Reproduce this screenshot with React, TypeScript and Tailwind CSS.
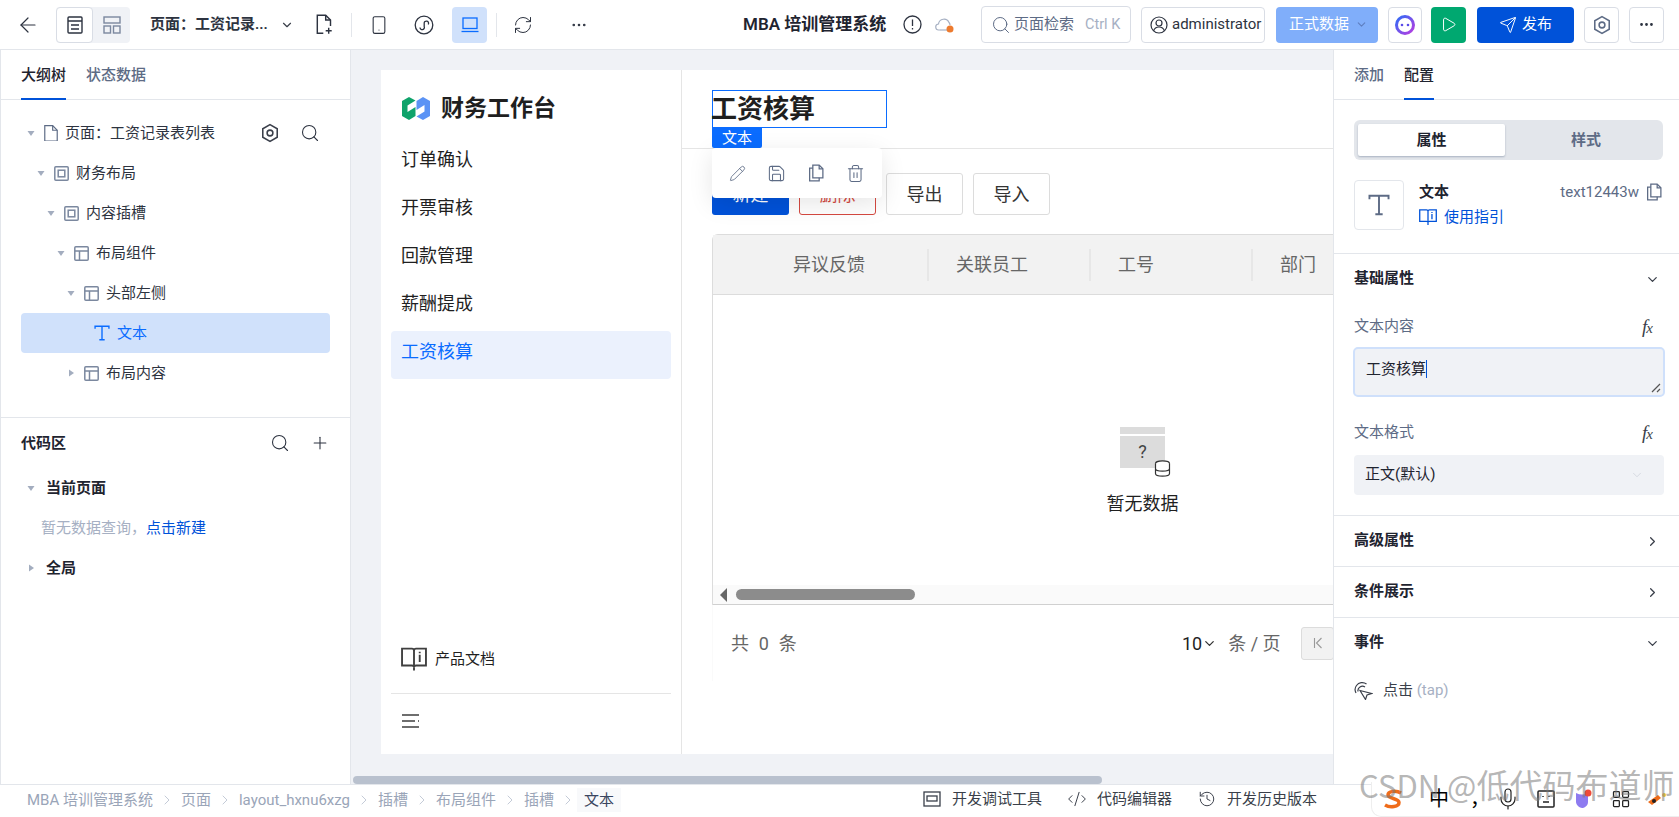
import React from "react";
import { ArrowLeft, ChevronDown, ChevronRight, Search, Plus, Ellipsis, Send, Pencil, Save, Trash2, Smartphone, RefreshCw, Mic, LayoutGrid, History, Code2, Play } from "lucide-react";

const Caret = ({ open = true, color = "#a3adbf" }: { open?: boolean; color?: string }) => (
  <svg width="10" height="10" viewBox="0 0 10 10" className="shrink-0">
    {open ? <path d="M1.5 3h7L5 8z" fill={color} /> : <path d="M3 1.5v7L8 5z" fill={color} />}
  </svg>
);

const Hex = ({ size = 18, color = "#3a3f4a" }: { size?: number; color?: string }) => (
  <svg width={size} height={size} viewBox="0 0 18 18" fill="none" stroke={color} strokeWidth="1.4">
    <path d="M9 1.5 15.5 5.2v7.6L9 16.5 2.5 12.8V5.2z" />
    <circle cx="9" cy="9" r="2.6" />
  </svg>
);

const FileIcon = ({ size = 16, color = "#5d6b85", plus = false }: { size?: number; color?: string; plus?: boolean }) => (
  <svg width={size} height={size * 1.2} viewBox="0 0 14 17" fill="none" stroke={color} strokeWidth="1.2" className="shrink-0">
    {plus ? (
      <>
        <path d="M6 16H1V1h7l4 4v5" />
        <path d="M8 1v4h4" />
        <path d="M10.500 11.500v5M8 14h5" />
      </>
    ) : (
      <>
        <path d="M0.700 0.700h8l4.600 4.600v11h-12.600z" />
        <path d="M8.700 0.700v4.600h4.600" />
      </>
    )}
  </svg>
);

const SlotIcon = () => (
  <svg width="15" height="15" viewBox="0 0 15 15" fill="none" stroke="#7b889f" strokeWidth="1.500" className="shrink-0">
    <rect x="0.800" y="0.800" width="13.400" height="13.400" rx="1" />
    <rect x="4.200" y="4.200" width="6.600" height="6.600" />
  </svg>
);

const LayoutIcon = () => (
  <svg width="15" height="15" viewBox="0 0 15 15" fill="none" stroke="#7b889f" strokeWidth="1.500" className="shrink-0">
    <rect x="0.800" y="0.800" width="13.400" height="13.400" rx="1" />
    <path d="M0.800 5h13.400M5.500 5v9.200" />
  </svg>
);

const TIcon = ({ color, size = 15 }: { color: string; size?: number }) => (
  <svg width={size} height={size} viewBox="0 0 15 15" fill="none" stroke={color} strokeWidth="1.300" className="shrink-0">
    <path d="M1 3.500V1.200h13v2.300M7.500 1.200v12.600M5 13.800h5" />
  </svg>
);

const CopyIcon = ({ color = "#5d6b85", size = 16 }: { color?: string; size?: number }) => (
  <svg width={size} height={size} viewBox="0 0 16 17" fill="none" stroke={color} strokeWidth="1.200">
    <path d="M5 1h6l3.500 3.500V13H5z" />
    <path d="M11 1v3.500h3.500" />
    <path d="M5 4H2v12h9v-3" />
  </svg>
);

const Book = ({ color, size = 18 }: { color: string; size?: number }) => (
  <svg width={size} height={size} viewBox="0 0 25 24" fill="none" stroke={color} strokeWidth="1.800">
    <path d="M1 2h9.500c1 0 2 .6 2 2v16c0-1-1-1.800-2-1.800H1zM24 2h-9.500c-1 0-2 .6-2 2v16c0-1 1-1.800 2-1.800H24z" />
    <path d="M18 8v7M18 5v1.500" />
    <path d="M12.500 20v3" />
  </svg>
);

const Fx = () => (
  <span className="mr-[27px] font-['Liberation_Serif'] italic text-[19px] leading-none text-[#3a3f4a] tracking-[-1px]">
    f<span className="text-[15px]">x</span>
  </span>
);

const TreeRow = ({ level, label, icon, open, active }: { level: number; label: string; icon: React.ReactNode; open?: boolean; active?: boolean }) => {
  const pads = ["pl-[5px]", "pl-[15px]", "pl-[25px]", "pl-[35px]", "pl-[45px]", "pl-[55px]"];
  return (
    <div className={`h-[40px] flex items-center rounded-[4px] ${pads[level]} ${active ? "bg-[#d0e1fb] text-[#0a6cff]" : "text-[#2d3340]"}`}>
      <span className="w-[18px] shrink-0">{open === undefined ? null : <Caret open={open} />}</span>
      {icon}
      <span className="ml-[7px] text-[15px]">{label}</span>
    </div>
  );
};

const NavItem = ({ label, active }: { label: string; active?: boolean }) => (
  <div className={`h-[48px] mx-[10px] px-[10px] rounded-[4px] text-[18px] pb-[7px] flex items-center ${active ? "bg-[#ebf1fd] text-[#0a6cff]" : "text-[#1f1f1f]"}`}>{label}</div>
);

const Tb = ({ children, cls }: { children: React.ReactNode; cls: string }) => (
  <div className={`h-[42px] w-[77px] rounded-[3px] flex items-center justify-center text-[18px] ${cls}`}>{children}</div>
);

const Section = ({ label, open, cls = "h-[51px]" }: { label: string; open?: boolean; cls?: string }) => (
  <div className={`flex items-center justify-between pl-[20px] pr-[19px] ${cls} border-t border-[#e3e6eb]`}>
    <span className="text-[15px] font-bold text-[#1f2430] pb-[1px]">{label}</span>
    {open ? <ChevronDown size={15} color="#3a3f4a" /> : <ChevronRight size={15} color="#3a3f4a" />}
  </div>
);

const Crumb = ({ label, last }: { label: string; last?: boolean }) => (
  <>
    <span className={last ? "text-[#3a4660] bg-[#f8f9fb] px-[7px] -mx-[7px] ml-[-5px] leading-[24px]" : ""}>{label}</span>
    {!last && <ChevronRight size={16} strokeWidth={1} color="#a6b0c3" className="mx-[6px]" />}
  </>
);

export default function App() {
  return (
    <div className="relative w-[1679px] h-[817px] overflow-hidden bg-white font-['Roboto','Noto_Sans_CJK_SC',sans-serif] text-[15px] text-[#1f2430]">
      {/* Top bar */}
      <header className="h-[50px] border-b border-[#e3e6eb] flex items-center pl-[16px]">
        <ArrowLeft size={24} strokeWidth={1.200} color="#2d3340" />
        <div className="ml-[16px] w-[74px] h-[36px] bg-[#f0f2f6] rounded-[4px] flex">
          <div className="w-[37px] bg-white border border-[#d9dde5] rounded-[4px] flex items-center justify-center">
            <svg width="16" height="18" viewBox="0 0 16 18" fill="none" stroke="#2d3340" strokeWidth="1.400"><rect x="1" y="1" width="14" height="16" rx="1" /><path d="M1 5h14M4 9h8M4 13h8" /></svg>
          </div>
          <div className="flex-1 flex items-center justify-center">
            <svg width="18" height="18" viewBox="0 0 18 18" fill="none" stroke="#7b889f" strokeWidth="1.400"><rect x="1" y="1" width="16" height="6" /><rect x="1" y="10" width="6.500" height="7" /><rect x="10.500" y="10" width="6.500" height="7" /></svg>
          </div>
        </div>
        <span className="ml-[20px] w-[116px] text-[15px] font-semibold whitespace-nowrap text-[#2d3340]">页面：工资记录...</span>
        <ChevronDown size={14} color="#3a3f4a" className="ml-[14px]" />
        <span className="ml-[22px]"><FileIcon plus size={17} color="#2d3340" /></span>
        <span className="ml-[18px] w-px h-[24px] bg-[#e3e6eb]" />
        <Smartphone size={20} strokeWidth={1.300} color="#2d3340" className="ml-[17px]" />
        <svg width="20" height="20" viewBox="0 0 20 20" fill="none" stroke="#2d3340" strokeWidth="1.300" className="ml-[25px]">
          <circle cx="10" cy="10" r="8.800" />
          <path d="M6 12.500a2.200 2.200 0 1 0 4.200-1V8.500a2.200 2.200 0 1 1 4 1" />
        </svg>
        <div className="ml-[18px] w-[35px] h-[36px] rounded-[4px] bg-[#d0e1fb] flex items-center justify-center">
          <svg width="18" height="16" viewBox="0 0 18 16" fill="none" stroke="#0a6cff" strokeWidth="1.300"><rect x="2" y="1" width="14" height="10.500" /><path d="M0.500 14.500h17" /></svg>
        </div>
        <span className="ml-[9px] w-px h-[24px] bg-[#e3e6eb]" />
        <RefreshCw size={20} strokeWidth={1.200} color="#2d3340" className="ml-[16px]" />
        <Ellipsis size={18} strokeWidth={1.500} color="#2d3340" className="ml-[37px]" />

        <span className="ml-[155px] text-[17px] font-semibold whitespace-nowrap w-[147px]">MBA 培训管理系统</span>
        <svg width="19" height="19" viewBox="0 0 19 19" fill="none" stroke="#2d3340" strokeWidth="1.300" className="ml-[13px]"><circle cx="9.500" cy="9.500" r="8.500" /><path d="M9.500 4.500v6.500M9.500 13v1.500" /></svg>
        <svg width="20" height="18" viewBox="0 0 20 18" fill="none" className="ml-[13px]"><path d="M5 14H4a3 3 0 0 1-.5-6A5.500 5.500 0 0 1 14 6.500 3.500 3.500 0 0 1 15 9" stroke="#a6b0c3" strokeWidth="1.200" /><path d="M5 14h7" stroke="#a6b0c3" strokeWidth="1.200" /><circle cx="15" cy="13" r="3.500" fill="#ed7b2f" /></svg>
        <div className="ml-[26px] w-[150px] h-[37px] border border-[#d9dde5] rounded-[4px] flex items-center pl-[9px]">
          <Search size={20} strokeWidth={1.200} color="#5d6b85" />
          <span className="ml-[3px] text-[15px] text-[#5d6b85]">页面检索</span>
          <span className="ml-[11px] text-[14.500px] text-[#a6b0c3]">Ctrl K</span>
        </div>
        <div className="ml-[10px] w-[124px] h-[36px] border border-[#d9dde5] rounded-[4px] flex items-center pl-[8px]">
          <svg width="18" height="18" viewBox="0 0 18 18" fill="none" stroke="#2d3340" strokeWidth="1.200"><circle cx="9" cy="9" r="8" /><circle cx="9" cy="7" r="3" /><path d="M3.500 15c1-3 3-4 5.500-4s4.500 1 5.500 4" /></svg>
          <span className="ml-[4px] text-[15px] text-[#2d3340]">administrator</span>
        </div>
        <div className="ml-[11px] w-[102px] h-[36px] bg-[#80aefa] rounded-[4px] flex items-center pl-[13px] text-white text-[15px]">
          正式数据
          <ChevronDown size={13} color="#5d7fc0" className="ml-[6px]" />
        </div>
        <div className="ml-[10px] w-[34px] h-[36px] border border-[#d9dde5] rounded-[4px] flex items-center justify-center">
          <svg width="22" height="22" viewBox="0 0 22 22" fill="none"><defs><linearGradient id="ai" x1="0" y1="0" x2="1" y2="1"><stop offset="0" stopColor="#2e6cf6" /><stop offset="1" stopColor="#b93ce0" /></linearGradient></defs><circle cx="11" cy="11" r="8.500" stroke="url(#ai)" strokeWidth="3" /><circle cx="8" cy="11" r="1.300" fill="#5a4be8" /><circle cx="14" cy="11" r="1.300" fill="#5a4be8" /></svg>
        </div>
        <div className="ml-[9px] w-[35px] h-[36px] bg-[#00a870] rounded-[4px] flex items-center justify-center">
          <Play size={17} strokeWidth={1.400} color="#fff" />
        </div>
        <div className="ml-[11px] w-[97px] h-[36px] bg-[#0052d9] rounded-[4px] flex items-center justify-center text-white text-[15px]">
          <Send size={18} strokeWidth={1.300} color="#fff" className="mr-[5px]" />
          发布
        </div>
        <div className="ml-[10px] w-[35px] h-[36px] border border-[#d9dde5] rounded-[4px] flex items-center justify-center">
          <Hex size={20} color="#5d6b85" />
        </div>
        <div className="ml-[10px] w-[35px] h-[36px] border border-[#d9dde5] rounded-[4px] flex items-center justify-center">
          <Ellipsis size={17} color="#2d3340" />
        </div>
      </header>

      <div className="flex h-[734px]">
        {/* Left panel */}
        <aside className="w-[351px] shrink-0 border-l border-[#e3e6eb] border-r flex flex-col">
          <div className="h-[50px] flex gap-[20px] pl-[20px] border-b border-[#e3e6eb]">
            <span className="h-[50px] pt-[14px] text-[15px] font-medium border-b-2 border-[#0052d9] text-[#1f2430]">大纲树</span>
            <span className="pt-[14px] text-[15px] font-medium text-[#5d6b85]">状态数据</span>
          </div>
          <div className="h-[318px] pt-[13px] px-[20px] border-b border-[#e3e6eb]">
            <div className="relative">
              <TreeRow level={0} label="页面：工资记录表列表" open icon={<FileIcon size={14} />} />
              <div className="absolute right-[10px] top-[10px] flex gap-[20px] items-center">
                <Hex size={20} />
                <Search size={20} strokeWidth={1.300} color="#2d3340" />
              </div>
            </div>
            <TreeRow level={1} label="财务布局" open icon={<SlotIcon />} />
            <TreeRow level={2} label="内容插槽" open icon={<SlotIcon />} />
            <TreeRow level={3} label="布局组件" open icon={<LayoutIcon />} />
            <TreeRow level={4} label="头部左侧" open icon={<LayoutIcon />} />
            <TreeRow level={5} label="文本" active icon={<TIcon color="#0a6cff" size={16} />} />
            <TreeRow level={4} label="布局内容" open={false} icon={<LayoutIcon />} />
          </div>
          <div className="h-[50px] flex items-center justify-between pl-[20px] pr-[20px]">
            <span className="font-bold text-[15px]">代码区</span>
            <div className="flex items-center gap-[20px]">
              <Search size={20} strokeWidth={1.300} color="#2d3340" />
              <Plus size={20} strokeWidth={1.300} color="#2d3340" />
            </div>
          </div>
          <div className="h-[40px] flex items-center pl-[25px]"><Caret /><span className="ml-[10px] font-bold">当前页面</span></div>
          <div className="h-[40px] flex items-center pl-[40px] text-[#a6b0c3]">暂无数据查询，<span className="text-[#0052d9]">点击新建</span></div>
          <div className="h-[40px] flex items-center pl-[25px]"><Caret open={false} /><span className="ml-[10px] font-bold">全局</span></div>
        </aside>

        {/* Canvas */}
        <main className="relative w-[982px] shrink-0 bg-[#f0f2f6] overflow-hidden">
          <div className="ml-[30px] mt-[20px] w-[1200px] h-[684px] bg-white flex">
            <div className="w-[301px] shrink-0 border-r border-[#e5e5e5] flex flex-col">
              <div className="h-[69px] flex items-center pl-[21px] pt-[7px]">
                <svg width="28" height="23" viewBox="0 0 28 23">
                  <polygon points="7,0 13.500,3.500 5.500,8.500 5.500,15 13.500,10 13.500,19 7,23 0,19 0,4" fill="#0fa36b" />
                  <polygon points="21,23 14.500,19.500 22.500,14.500 22.500,8 14.500,13 14.500,4 21,0 28,4 28,19" fill="#5b93f5" />
                </svg>
                <span className="ml-[11px] text-[23px] font-bold leading-none text-[#1f1f1f]">财务工作台</span>
              </div>
              <NavItem label="订单确认" />
              <NavItem label="开票审核" />
              <NavItem label="回款管理" />
              <NavItem label="薪酬提成" />
              <NavItem label="工资核算" active />
              <div className="flex-1" />
              <div className="h-[60px] flex items-center pl-[20px] pb-[8px]">
                <Book color="#3f3f3f" size={26} />
                <span className="ml-[8px] text-[15px] text-[#1f1f1f]">产品文档</span>
              </div>
              <div className="h-[61px] mx-[10px] border-t border-[#e5e5e5] flex items-center pl-[11px] pb-[7px]">
                <svg width="18" height="14" viewBox="0 0 18 14" stroke="#3f3f3f" strokeWidth="1.500"><path d="M0 1h17M0 7h13M0 13h17M17 7h-1" /></svg>
              </div>
            </div>
            <div className="flex-1 min-w-0 flex flex-col">
              <div className="relative h-[79px] border-b border-[#e5e5e5] pl-[30px] pt-[20px]">
                <div className="w-[175px] h-[38px] border border-[#0a6cff] text-[26px] font-bold leading-[37px] -indent-[2px] text-[#1f1f1f]">工资核算</div>
                <div className="absolute left-[30px] top-[58px] w-[50px] h-[20px] bg-[#0a6cff] rounded-b-[2px] text-white text-[15px] leading-[20px] text-center">文本</div>
                <div className="absolute z-10 left-[30px] top-[78px] w-[170px] h-[50px] bg-white rounded-[4px] shadow-[0_6px_24px_rgba(0,0,0,0.10)] flex items-center justify-around px-[6px]">
                  <Pencil size={17} strokeWidth={1.200} color="#5d6b85" />
                  <Save size={19} strokeWidth={1.300} color="#5d6b85" />
                  <CopyIcon color="#5d6b85" size={18} />
                  <Trash2 size={19} strokeWidth={1.300} color="#5d6b85" />
                </div>
              </div>
              <div className="flex gap-[10px] pl-[30px] pt-[24px]">
                <Tb cls="bg-[#0052d9] text-white">新建</Tb>
                <Tb cls="border border-[#d54941] text-[#d54941]">删除</Tb>
                <Tb cls="border border-[#dcdcdc] text-[#333]">导出</Tb>
                <Tb cls="border border-[#dcdcdc] text-[#333]">导入</Tb>
              </div>
              <div className="ml-[30px] mt-[19px] w-[800px] h-[371px] flex flex-col border-l border-t border-[#dcdcdc] rounded-tl-[6px]">
                <div className="h-[60px] shrink-0 bg-[#f2f2f2] border-b border-[#dcdcdc] grid grid-cols-[214px_162px_162px_162px] items-center text-[18px] text-[#666]">
                  {["异议反馈", "关联员工", "工号", "部门"].map((t, i) => (
                    <div key={t} className={`h-[32px] flex items-center ${i === 0 ? "pl-[80px]" : "pl-[27px] border-l-2 border-[#e7e7e7]"}`}>{t}</div>
                  ))}
                </div>
                <div className="flex-1 flex flex-col items-center pt-[132px] pl-[60px]">
                  <div className="relative w-[45px]">
                    <div className="h-[7px] bg-[#dcdcdc]" />
                    <div className="mt-[2px] h-[32px] bg-[#dcdcdc] flex items-center justify-center text-[18px] text-[#444] leading-none">?</div>
                    <svg width="17" height="17" viewBox="0 0 17 17" fill="white" stroke="#333" strokeWidth="1.200" className="absolute -right-[6px] top-[33px]">
                      <ellipse cx="8.500" cy="3.500" rx="7" ry="2.700" />
                      <path d="M1.500 3.500v10c0 1.500 3 2.700 7 2.700s7-1.200 7-2.700v-10M1.500 8.500c0 1.500 3 2.700 7 2.700s7-1.200 7-2.700" />
                    </svg>
                  </div>
                  <div className="mt-[22px] text-[18px] text-[#1f1f1f]">暂无数据</div>
                </div>
                <div className="h-[20px] shrink-0 bg-[#fafafa] border-b border-[#d0d0d0] flex items-center pl-[6px]">
                  <svg width="9" height="14" viewBox="0 0 9 14"><path d="M8 0v14L1 7z" fill="#666" /></svg>
                  <div className="ml-[8px] w-[179px] h-[11px] rounded-full bg-[#8c8c8c]" />
                </div>
              </div>
              <div className="ml-[30px] w-[800px] h-[76px] flex items-center text-[18px] text-[#666] border-l border-[#fafafa]">
                <span className="ml-[18px] w-[70px] whitespace-nowrap tracking-[0.300px]">共&nbsp;&nbsp;0&nbsp;&nbsp;条</span>
                <span className="ml-[381px] text-[#1f1f1f]">10</span>
                <ChevronDown size={15} color="#333" />
                <span className="ml-[11px] w-[56px] whitespace-nowrap">条 / 页</span>
                <div className="ml-[17px] w-[33px] h-[33px] bg-[#f2f2f2] border border-[#dcdcdc] rounded-[3px] flex items-center justify-center">
                  <svg width="10" height="12" viewBox="0 0 10 12" fill="none" stroke="#999" strokeWidth="1.100"><path d="M1.500 1v10M8.500 1 3.500 6l5 5" /></svg>
                </div>
              </div>
            </div>
          </div>
          <div className="ml-[2px] mt-[22px] w-[749px] h-[8px] rounded-full bg-[#b9c1ce]" />
        </main>

        {/* Right panel */}
        <aside className="w-[346px] shrink-0 border-l border-[#e3e6eb] bg-white flex flex-col">
          <div className="h-[50px] flex gap-[20px] pl-[20px] border-b border-[#e3e6eb]">
            <span className="pt-[14px] font-medium text-[#5d6b85]">添加</span>
            <span className="h-[50px] pt-[14px] font-medium border-b-2 border-[#0052d9]">配置</span>
          </div>
          <div className="ml-[20px] mr-[16px] mt-[20px] h-[40px] bg-[#e3e6eb] rounded-[6px] p-[4px] flex">
            <div className="w-[147px] bg-white rounded-[2px] shadow-[0_1px_2px_rgba(80,100,130,0.4)] flex items-center justify-center font-semibold">属性</div>
            <div className="flex-1 flex items-center justify-center font-semibold text-[#5d6b85] pl-[8px]">样式</div>
          </div>
          <div className="ml-[20px] mr-[16px] mt-[20px] flex h-[50px]">
            <div className="w-[50px] h-[50px] border border-[#e3e6eb] rounded-[4px] flex items-center justify-center"><TIcon color="#5d6b85" size={22} /></div>
            <div className="ml-[15px] flex-1">
              <div className="flex items-center justify-between h-[24px]">
                <span className="font-bold">文本</span>
                <span className="flex items-center gap-[6px] text-[#5d6b85] text-[15px]">text12443w<CopyIcon size={18} /></span>
              </div>
              <div className="flex items-center h-[26px] text-[#0052d9]">
                <Book color="#0052d9" size={18} />
                <span className="ml-[7px]">使用指引</span>
              </div>
            </div>
          </div>
          <div className="mt-[23px]"><Section label="基础属性" open /></div>
          <div className="flex items-center justify-between pl-[20px] h-[20px] mt-[12px] text-[#5d6b85]"><span>文本内容</span><Fx /></div>
          <div className="relative ml-[19px] mr-[14px] mt-[11px] h-[50px] bg-[#f0f2f6] border-2 border-[#cfe0fb] rounded-[5px] pl-[11px] pt-[9px] leading-[22px] flex items-start">
            <span>工资核算</span><span className="w-px h-[18px] bg-[#0052d9] mt-[2px]" />
            <svg width="10" height="10" viewBox="0 0 10 10" stroke="#555" strokeWidth="1.200" className="absolute right-[2px] bottom-[2px]"><path d="M1 9 9 1M6 9l3-3" /></svg>
          </div>
          <div className="flex items-center justify-between pl-[20px] h-[20px] mt-[25px] text-[#5d6b85]"><span>文本格式</span><Fx /></div>
          <div className="ml-[20px] mr-[15px] mt-[13px] h-[40px] bg-[#f0f2f6] rounded-[4px] pl-[11px] pr-[20px] flex items-center justify-between">
            <span className="pb-[1px]">正文(默认)</span><ChevronDown size={14} strokeWidth={1} color="#c2c8d2" />
          </div>
          <div className="mt-[20px]"><Section label="高级属性" /></div>
          <Section label="条件展示" />
          <Section label="事件" open />
          <div className="ml-[20px] mt-[10px] flex items-center h-[24px]">
            <svg width="19" height="19" viewBox="0 0 19 19" fill="none" stroke="#3a3f4a" strokeWidth="1.200"><path d="M6 9.500l11.500 3-4.500 1.500-1.500 4.500z" /><path d="M4 10.500a4.500 4.500 0 0 1 7-4.500M2 12a7 7 0 0 1 .5-7.500A7 7 0 0 1 12.500 3" /></svg>
            <span className="ml-[10px] text-[#3a3f4a]">点击 <span className="text-[#a6b0c3]">(tap)</span></span>
          </div>
        </aside>
      </div>

      {/* Footer */}
      <footer className="h-[33px] border-t border-[#e3e6eb] flex items-center pb-[2px]">
        <div className="flex items-center pl-[27px] text-[#9aa5b8] text-[15px] whitespace-nowrap">
          <Crumb label="MBA 培训管理系统" />
          <Crumb label="页面" />
          <Crumb label="layout_hxnu6xzg" />
          <Crumb label="插槽" />
          <Crumb label="布局组件" />
          <Crumb label="插槽" />
          <Crumb label="文本" last />
        </div>
        <div className="absolute left-[923px] bottom-[7px] flex items-center text-[15px] text-[#3a3f4a] whitespace-nowrap">
          <svg width="18" height="16" viewBox="0 0 18 16" fill="none" stroke="#3a3f4a" strokeWidth="1.300"><rect x="1" y="1" width="16" height="14" /><rect x="4" y="5" width="10" height="5" /></svg>
          <span className="ml-[11px]">开发调试工具</span>
          <Code2 size={20} strokeWidth={1.200} color="#3a3f4a" className="ml-[25px]" />
          <span className="ml-[10px]">代码编辑器</span>
          <History size={18} strokeWidth={1.300} color="#3a3f4a" className="ml-[26px]" />
          <span className="ml-[11px]">开发历史版本</span>
        </div>
      </footer>

      {/* Input-method toolbar over the page */}
      <div className="absolute left-[1371px] top-[782px] w-[320px] h-[35px] bg-white rounded-bl-[10px] border-l border-b border-[#eeeeee] flex items-center">
        <svg width="22" height="22" viewBox="0 0 22 22" fill="none" stroke="#ef6c1a" strokeWidth="3.500" className="ml-[10px]"><path d="M19 5C14 2 6 3 6 7c0 4 11 3 11 7.500C17 19 8 20 3 17" /></svg>
        <span className="ml-[25px] text-[20px] text-black leading-none">中</span>
        <span className="ml-[21px] text-[20px] text-black leading-none">，</span>
        <Mic size={24} strokeWidth={1.200} color="#222" className="ml-[6px]" />
        <svg width="20" height="20" viewBox="0 0 20 20" fill="none" stroke="#222" strokeWidth="1.500" className="ml-[16px]"><rect x="2" y="2" width="16" height="16" rx="1" /><path d="M7 7v1M13 7v1M7 13h6" /></svg>
        <svg width="20" height="20" viewBox="0 0 20 20" className="ml-[17px]"><path d="M3 4c4 2 8 2 12 0v9c0 4-4 6-6 6s-6-3-6-6z" fill="#8d7bf0" /><circle cx="15" cy="4" r="3.500" fill="#ef4a3a" /></svg>
        <LayoutGrid size={20} strokeWidth={1.500} color="#222" className="ml-[18px]" />
        <svg width="20" height="20" viewBox="0 0 20 20" className="ml-[15px]"><path d="M2 13 12 6l3 3-9 7z" fill="#ef6c1a" /><circle cx="8" cy="12" r="2" fill="#222" /><circle cx="18" cy="6" r="2" fill="#f5c542" /></svg>
      </div>
      <div className="absolute left-[1359px] top-[764px] whitespace-nowrap text-[31px] leading-[40px] text-[rgba(120,120,120,0.55)] font-['Noto_Sans_CJK_SC',sans-serif]">CSDN @<span className="text-[33px]">低代码布道师</span></div>
    </div>
  );
}
